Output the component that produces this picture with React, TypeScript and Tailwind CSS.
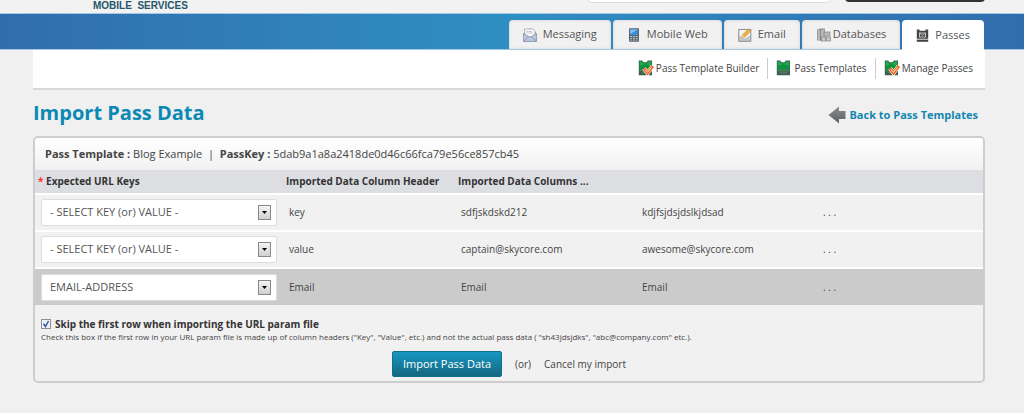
import { useState } from "react";
import type { ReactNode } from "react";

const EnvelopeIcon = () => (
  <svg viewBox="0 0 14 14" className="h-[14px] w-[14px] shrink-0">
    <path d="M1 5 7 .8 13 5v8H1z" fill="#e3e6ea" stroke="#8b929b" strokeWidth=".8" />
    <path d="M1.500 1h8.500l2 2v6H1.500z" fill="#f7f7f7" stroke="#9aa1a8" strokeWidth=".7" />
    <path d="M3 3.500h6M3 5h7" stroke="#b4b9be" strokeWidth=".7" />
    <path d="M.6 5.500 7 9.500l6.400-4v7.900H.6z" fill="#bccbdd" stroke="#8492a5" strokeWidth=".8" />
    <path d="m.6 13.400 5-4.700M13.400 13.400l-5-4.700" stroke="#8492a5" strokeWidth=".8" />
  </svg>
);

const PhoneIcon = () => (
  <svg viewBox="0 0 14 14" className="h-[14px] w-[14px] shrink-0">
    <rect x="2" y=".2" width="10" height="13.600" rx="1" fill="#59636d" />
    <rect x="3.200" y="1.400" width="7.600" height="5.600" fill="#3f8fdc" />
    <path d="M3.200 1.400h7.600L3.200 6z" fill="#84bff2" />
    <path d="M3.200 8.500h7.600M3.200 10.300h7.600M3.200 12.100h7.600" stroke="#b9c1c8" strokeWidth="1" strokeDasharray="2 .8" />
  </svg>
);

const EmailIcon = () => (
  <svg viewBox="0 0 14 14" className="h-[14px] w-[14px] shrink-0">
    <rect x=".8" y="1.500" width="12" height="11.800" fill="#f4f4f4" stroke="#8d8d8d" strokeWidth="1" />
    <path d="M1 8.500 6.500 11.500l6-3.500v5H1z" fill="#c9cdd2" stroke="#949aa0" strokeWidth=".6" />
    <path d="m3.500 10 .8-3L10.500 1l2.300 2-6.200 6.200z" fill="#f0b13c" stroke="#c48a2c" strokeWidth=".6" />
    <path d="m3.500 10 .8-3 2.300 2.200z" fill="#e9d3ad" />
  </svg>
);

const DatabaseIcon = () => (
  <svg viewBox="0 0 15 14" className="h-[14px] w-[15px] shrink-0">
    <path d="M1 1.500 4 .5h5v12H1z" fill="#9c9c9c" />
    <path d="M2 3h6M2 5h6M2 7h6M2 9h6M2 11h6" stroke="#dedede" strokeWidth=".9" />
    <path d="M4.500 1v11.500" stroke="#777" strokeWidth=".7" />
    <rect x="8" y="4" width="6" height="4" fill="#b9b9b9" stroke="#858585" strokeWidth=".7" />
    <rect x="5.500" y="9" width="4" height="4" fill="#ccc" stroke="#808080" strokeWidth=".7" />
    <rect x="10.500" y="9" width="4" height="4" fill="#ccc" stroke="#808080" strokeWidth=".7" />
  </svg>
);

const PassIcon = () => (
  <svg viewBox="0 0 13 13" className="h-[13px] w-[13px] shrink-0">
    <path d="M.8.500h2.700v1.300h6V.5h2.700v9.300H.8z" fill="#444" />
    <rect x="3.500" y="4" width="6" height="4" fill="none" stroke="#ddd" strokeWidth=".8" />
    <path d="m3.500 4 3 2.300L9.500 4" fill="none" stroke="#ddd" strokeWidth=".7" />
    <path d="M.8 10.600h11.400v2.200H.8z" fill="#444" />
  </svg>
);

const GreenPassIcon = ({ checked = false }: { checked?: boolean }) => (
  <svg viewBox="0 0 16 16" className="h-4 w-4 shrink-0">
    <path d="M.8.500h3.400l1.200 1.800h3.200L9.800.5h4.200v14.800H.8z" fill="#3b5f4c" />
    <path d="M1.600 1.300h2l1.400 1.900h4l1.300-1.900h2.900v8.500H1.600z" fill="#18ac4a" />
    <path d="M1.600 6.300 7.400 4l5.800 2.300v3.500H1.600z" fill="#109040" />
    <path d="M1.800 10.800h11.200M3.500 12.800h8" stroke="#6d8a78" strokeWidth=".8" />
    {checked && (
      <>
        <path d="m6 8.500 3.500 4.500 5.300-7" fill="none" stroke="#fff" strokeWidth="4.200" />
        <path d="m6 8.500 3.500 4.500 5.300-7" fill="none" stroke="#ee6a1c" strokeWidth="3" />
        <path d="m7 9.600 2.500 2.800 4-5" fill="none" stroke="#fff" strokeWidth=".8" />
      </>
    )}
  </svg>
);

const BackArrow = () => (
  <svg viewBox="0 0 18 18" className="h-[18px] w-[18px] shrink-0">
    <defs>
      <linearGradient id="arrow" x1="0" y1="0" x2="0" y2="1">
        <stop offset="0" stopColor="#8a8c8e" />
        <stop offset="1" stopColor="#5d6063" />
      </linearGradient>
    </defs>
    <path d="M.5 9 11 .5V5h6.500v8H11v4.500z" fill="url(#arrow)" />
  </svg>
);

const tabs = [
  { label: "Messaging", icon: <EnvelopeIcon />, gap: "gap-[6px]" },
  { label: "Mobile Web", icon: <PhoneIcon />, gap: "gap-[6px]" },
  { label: "Email", icon: <EmailIcon />, gap: "gap-[6px]" },
  { label: "Databases", icon: <DatabaseIcon />, gap: "gap-[2px]" },
  { label: "Passes", icon: <PassIcon />, gap: "gap-[6px]", active: true },
];

const subLinks = [
  { label: "Pass Template Builder", checked: true },
  { label: "Pass Templates", checked: false },
  { label: "Manage Passes", checked: true },
];

const rows = [
  { key: "select", header: "key", values: ["sdfjskdskd212", "kdjfsjdsjdslkjdsad", ". . ."] },
  { key: "select", header: "value", values: ["captain@skycore.com", "awesome@skycore.com", ". . ."] },
  { key: "email", header: "Email", values: ["Email", "Email", ". . ."], selected: true },
];

function Tab({ icon, gap, active, children }: { icon: ReactNode; gap: string; active?: boolean; children: ReactNode }) {
  return (
    <a
      href="#"
      className={`flex items-center rounded-t px-[14px] text-[11px] text-[#555] ${gap} ${
        active ? "-mb-px h-[30px] bg-white" : "h-[29px] bg-[#f1f1f1] shadow-[inset_0_0_3px_#ccc]"
      }`}
    >
      {icon}
      {children}
    </a>
  );
}

function KeySelect({ value, label }: { value: string; label: string }) {
  return (
    <div className="relative w-[236px]">
      <select
        aria-label={label}
        defaultValue={value}
        className="block h-[27px] w-full appearance-none rounded-xs border border-[#ddd] bg-white pl-2 text-[11px] text-[#555]"
      >
        <option value="select">- SELECT KEY (or) VALUE -</option>
        <option value="email">EMAIL-ADDRESS</option>
      </select>
      <span className="pointer-events-none absolute top-[6px] right-[6px] flex h-[15px] w-[13px] items-center justify-center border border-[#888] bg-linear-to-b from-[#f4f4f4] to-[#d0d0d0]">
        <svg viewBox="0 0 5 3" className="h-[3px] w-[5px]">
          <path d="M0 0h5L2.500 3z" fill="#000" />
        </svg>
      </span>
    </div>
  );
}

export default function App() {
  const [skipFirst, setSkipFirst] = useState(true);

  return (
    <div className="min-h-screen bg-[#f0f0f0] font-['Open_Sans',sans-serif] text-[#444]">
      <header className="flex h-[13px] items-end bg-[#f2f2f2] pr-[39px] pl-[93px]">
        <span className="self-start font-['Liberation_Sans',sans-serif] text-[10px] leading-[11px] font-bold whitespace-pre text-[#24566b]">
          MOBILE  SERVICES
        </span>
        <input
          type="search"
          aria-label="Search"
          className="mr-[14px] mb-[10px] ml-auto h-6 w-[243px] rounded border border-[#ddd] bg-white"
        />
        <button aria-label="Account" className="mb-[11px] h-6 w-[140px] rounded bg-[#333]" />
      </header>

      <nav className="flex h-[37px] items-end justify-end gap-[2px] border-y border-[#a5c9e0] bg-linear-to-r from-[#316dae] via-[#2e8fc4] to-[#316dae] pr-10">
        {tabs.map((tab) => (
          <Tab key={tab.label} icon={tab.icon} gap={tab.gap} active={tab.active}>
            {tab.label}
          </Tab>
        ))}
      </nav>

      <div className="pr-[39px] pl-[33px]">
        <nav className="flex h-10 items-center justify-end border-b-2 border-[#d8d8d8] bg-white pr-3 pb-[2px]">
          {subLinks.map((link, index) => (
            <a
              key={link.label}
              href="#"
              className={`flex h-[21px] items-center gap-[2px] text-[10px] ${
                index > 0 ? "ml-2 border-l border-[#ccc] pl-2" : ""
              }`}
            >
              <GreenPassIcon checked={link.checked} />
              {link.label}
            </a>
          ))}
        </nav>

        <div className="flex h-[46px] items-center justify-between pr-[7px]">
          <h1 className="text-xl font-bold text-[#0b89b5]">Import Pass Data</h1>
          <a href="#" className="flex items-center gap-[3px] pt-1 text-[11px] font-bold text-[#1287b1]">
            <BackArrow />
            Back to Pass Templates
          </a>
        </div>

        <main className="overflow-hidden rounded-[5px] border-2 border-[#cdcdcd] bg-[#f1f1f1]">
          <p className="flex h-8 items-center bg-linear-to-b from-white to-[#f1f1f1] pl-[10px] text-[11px] whitespace-pre">
            <b>Pass Template : </b>Blog Example  |  <b>PassKey : </b>5dab9a1a8a2418de0d46c66fca79e56ce857cb45
          </p>

          <table className="w-full table-fixed text-left text-[10px]">
            <colgroup>
              <col className="w-[246px]" />
              <col className="w-[172px]" />
              <col className="w-[181px]" />
              <col className="w-[181px]" />
              <col />
            </colgroup>
            <thead>
              <tr className="h-6 border-b-2 border-white bg-[#dddee2] whitespace-nowrap text-[#333]">
                <th className="pl-[3px]">
                  <span className="text-[#f33]">*</span> Expected URL Keys
                </th>
                <th className="pl-[5px]">Imported Data Column Header</th>
                <th className="pl-[5px]" colSpan={3}>
                  Imported Data Columns ...
                </th>
              </tr>
            </thead>
            <tbody>
              {rows.map((row, index) => (
                <tr
                  key={index}
                  className={row.selected ? "h-[37px] bg-[#cbcbcb]" : "h-[37px] border-b-2 border-white"}
                >
                  <td className="pl-[6px]">
                    <KeySelect value={row.key} label={`URL key for ${row.header}`} />
                  </td>
                  <td className="pl-2">{row.header}</td>
                  {row.values.map((value, i) => (
                    <td key={i} className="pl-2">
                      {value}
                    </td>
                  ))}
                </tr>
              ))}
            </tbody>
          </table>

          <form className="px-[6px] pt-[11px] pb-1" onSubmit={(e) => e.preventDefault()}>
            <label className="flex h-4 items-center gap-1 text-[10px] font-bold text-[#333]">
              <span className="relative h-[10px] w-[10px]">
                <input
                  type="checkbox"
                  checked={skipFirst}
                  onChange={(e) => setSkipFirst(e.target.checked)}
                  className="block h-[10px] w-[10px] appearance-none border border-[#8a8f99] bg-[#eef0f4]"
                />
                {skipFirst && (
                  <svg viewBox="0 0 10 10" className="pointer-events-none absolute inset-0 h-[10px] w-[10px]">
                    <path d="m2.500 4.800 2 2.700 3-5.500" fill="none" stroke="#3b55a5" strokeWidth="1.500" />
                  </svg>
                )}
              </span>
              Skip the first row when importing the URL param file
            </label>
            <p className="text-[8px] leading-[10px]">
              Check this box if the first row in your URL param file is made up of column headers ("Key", "Value", etc.)
              and not the actual pass data ( "sh43jdsjdks", "abc@company.com" etc.).
            </p>
            <div className="mt-[9px] flex items-center justify-center gap-[13px] text-[10px]">
              <button className="h-[26px] w-[110px] rounded-xs border border-[#12708f] bg-linear-to-b from-[#1797c2] to-[#14677f] text-[11px] text-white">
                Import Pass Data
              </button>
              <span>(or)</span>
              <a href="#">Cancel my import</a>
            </div>
          </form>
        </main>
      </div>
    </div>
  );
}
